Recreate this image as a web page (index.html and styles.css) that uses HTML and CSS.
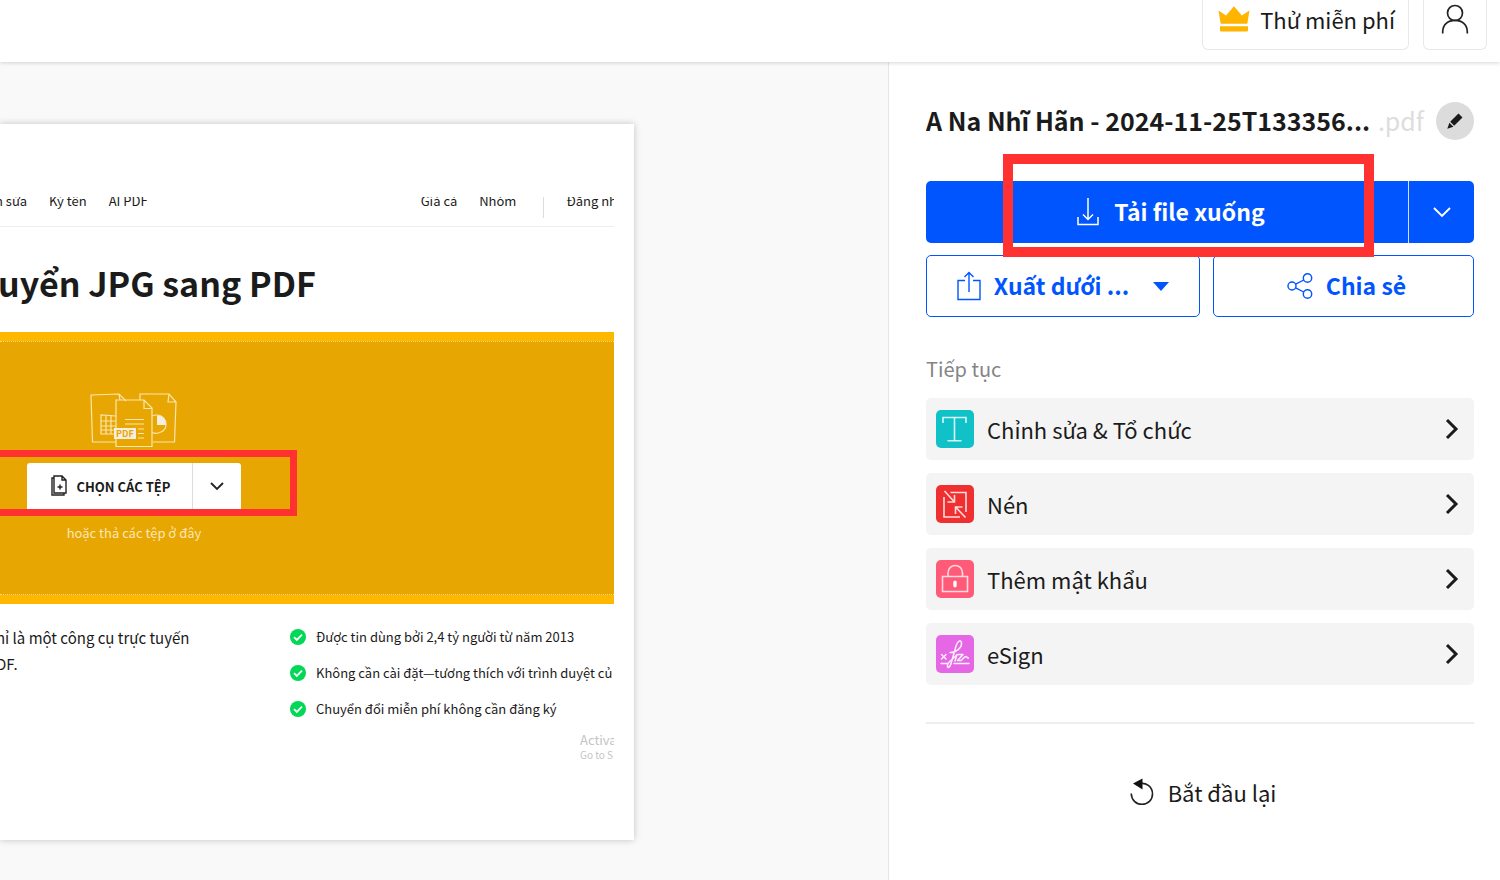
FILE: index.html
```html
<!DOCTYPE html>
<html lang="vi">
<head>
<meta charset="utf-8">
<meta name="viewport" content="width=device-width, initial-scale=1">
<title>Chuyển JPG sang PDF</title>
<link rel="stylesheet" href="styles.css">
</head>
<body>
<header class="topbar">
  <button class="top-btn trial" type="button">
    <svg class="crown" viewBox="0 0 32 26" width="32" height="26" aria-hidden="true"><path fill="#ffb400" d="M.5 4.500 8 9.500 16 .3l7.800 9.200 7.700-5-2.200 13.300H2.700zM2 20.300h28v4q0 1.200-1.200 1.200H3.200Q2 25.500 2 24.300z"/></svg>
    <span>Thử miễn phí</span>
  </button>
  <button class="top-btn account" type="button" aria-label="Tài khoản">
    <svg viewBox="0 0 28 30" width="28" height="30" fill="none" stroke="#222" stroke-width="1.700" aria-hidden="true"><circle cx="14" cy="9" r="7.500"/><path d="M1.700 29.500V28C1.700 20.500 7 16.300 14 16.300S26.300 20.500 26.300 28v1.500"/></svg>
  </button>
</header>
<div class="workspace">
  <main class="preview">
    <article class="sheet">
      <nav class="site-nav">
        <div class="nav-left"><span>n sửa</span><span>Ký tên</span><span>AI PDF</span></div>
        <div class="nav-right"><span>Giá cả</span><span>Nhóm</span><i class="nav-sep"></i><span>Đăng nh</span></div>
      </nav>
      <h1 class="headline">uyển JPG sang PDF</h1>
      <section class="drop">
        <div class="drop-area">
          <div class="drop-col">
            <svg class="files" viewBox="0 0 88 56" width="88" height="56" fill="none" stroke="#f9e6b0" stroke-width="1.200" aria-hidden="true">
              <path d="M26 50H2.500L1 3l28-1 7 7M29 2l1 6M50 8V2h29l7 8-1.500 40H63M79 2l-1 8h8"/>
              <path d="M26 24l-15-1v19h14M11 29h15M11 34h15M11 38h14M16 23v19M21 23v19"/>
              <path d="M26 36V8h28l8 8v38.500H26V47M54 8v8.500h8M35 27.500h19M35 32h19M48 37h6M48 41.500h6M48 46h6"/>
              <path d="M62 24q5-2 9 0 5 3 5 8.500T71 40q-5 2.500-9 .5"/>
              <path fill="#f5eee0" stroke="none" d="M67 23.500q9 0 9 9.500h-9zM24 36h22v11H24z"/>
              <text class="files-label" x="26" y="45">PDF</text>
            </svg>
            <div class="pick">
              <button class="pick-main" type="button">
                <svg viewBox="0 0 18 22" width="18" height="22" fill="none" stroke="#222" stroke-width="1.400" aria-hidden="true"><path d="M4 1h8l4 4v13H4zM12 1v4h4M4 3H2v17h12v-2M10 9.500v5M7.500 12h5"/></svg>
                <span>CHỌN CÁC TỆP</span>
              </button>
              <button class="pick-more" type="button" aria-label="Nguồn khác">
                <svg viewBox="0 0 14 10" width="14" height="10" fill="none" stroke="#222" stroke-width="1.800" aria-hidden="true"><path d="M1 2l6 6 6-6"/></svg>
              </button>
            </div>
            <p class="hint">hoặc thả các tệp ở đây</p>
            <div class="mark mark-pick"></div>
          </div>
        </div>
      </section>
      <div class="about">
        <p class="blurb">hỉ là một công cụ trực tuyến<br>DF.</p>
        <ul class="points">
          <li><svg viewBox="0 0 16 16" width="16" height="16" aria-hidden="true"><circle cx="8" cy="8" r="8" fill="#00d856"/><path d="M4 8.200l2.800 2.800L12 5.700" fill="none" stroke="#fff" stroke-width="1.800"/></svg>Được tin dùng bởi 2,4 tỷ người từ năm 2013</li>
          <li><svg viewBox="0 0 16 16" width="16" height="16" aria-hidden="true"><circle cx="8" cy="8" r="8" fill="#00d856"/><path d="M4 8.200l2.800 2.800L12 5.700" fill="none" stroke="#fff" stroke-width="1.800"/></svg>Không cần cài đặt—tương thích với trình duyệt củ</li>
          <li><svg viewBox="0 0 16 16" width="16" height="16" aria-hidden="true"><circle cx="8" cy="8" r="8" fill="#00d856"/><path d="M4 8.200l2.800 2.800L12 5.700" fill="none" stroke="#fff" stroke-width="1.800"/></svg>Chuyển đổi miễn phí không cần đăng ký</li>
        </ul>
      </div>
      <div class="watermark"><p class="wm-title">Activa</p><p class="wm-sub">Go to S</p></div>
    </article>
  </main>
  <aside class="panel">
    <div class="file-row">
      <h2 class="file-name">A Na Nhĩ Hãn - 2024-11-25T133356...</h2>
      <span class="file-ext">.pdf</span>
      <button class="edit" type="button" aria-label="Đổi tên">
        <svg viewBox="0 0 16 16" width="16" height="16" fill="#1b1b1b" aria-hidden="true"><path d="M11.500.5l4 4-8.300 8.300-4-4zM2.400 9.700l4 4L.3 15.700z"/></svg>
      </button>
    </div>
    <div class="actions">
      <div class="download">
        <button class="download-main" type="button">
          <svg viewBox="0 0 22 28" width="22" height="28" fill="none" stroke="#fff" stroke-width="1.500" aria-hidden="true"><path d="M11 0v21M6 16.500l5 5 5-5M1 19v7.500h20V19"/></svg>
          <span>Tải file xuống</span>
        </button>
        <button class="download-more" type="button" aria-label="Tùy chọn tải xuống">
          <svg viewBox="0 0 18 12" width="18" height="12" fill="none" stroke="#fff" stroke-width="1.900" aria-hidden="true"><path d="M1 2l8 8 8-8"/></svg>
        </button>
      </div>
      <div class="secondary">
        <button class="ghost" type="button">
          <svg viewBox="0 0 24 30" width="24" height="30" fill="none" stroke="#0055ff" stroke-width="1.400" aria-hidden="true"><path d="M8 9.500H1V28.500h22V9.500h-7M12 21V1.500M7.500 6L12 1.500 16.500 6"/></svg>
          <span>Xuất dưới ...</span>
          <svg class="caret" viewBox="0 0 16 9" width="16" height="9" aria-hidden="true"><path fill="#0055ff" d="M0 0h16L8 9z"/></svg>
        </button>
        <button class="ghost share" type="button">
          <svg viewBox="0 0 26 26" width="26" height="26" fill="none" stroke="#0055ff" stroke-width="1.400" aria-hidden="true"><circle cx="5" cy="13" r="4"/><circle cx="20.500" cy="5" r="4.200"/><circle cx="20.500" cy="21" r="4.200"/><path d="M8.600 11.200l8.200-4.200M8.600 14.800l8.200 4.200"/></svg>
          <span>Chia sẻ</span>
        </button>
      </div>
      <div class="mark mark-download"></div>
    </div>
    <h3 class="next-title">Tiếp tục</h3>
    <nav class="next">
      <a class="tool" href="#edit">
        <svg viewBox="0 0 38 38" width="38" height="38" fill="none" aria-hidden="true"><rect width="38" height="38" rx="5" fill="#10c1c7"/><path stroke="#d5fbfb" stroke-width="1.600" d="M7 13V7.500h23V13M18.500 7.500v23M11.500 30.700h14"/></svg>
        <span>Chỉnh sửa &amp; Tổ chức</span>
        <svg class="go" viewBox="0 0 14 22" width="14" height="22" aria-hidden="true"><path d="M2 2l9 9-9 9"/></svg>
      </a>
      <a class="tool" href="#compress">
        <svg viewBox="0 0 38 38" width="38" height="38" fill="none" aria-hidden="true"><rect width="38" height="38" rx="5" fill="#f03030"/><path stroke="#ffdcdc" stroke-width="1.600" d="M14.500 7.500h15.500V27M8 12v20h16M8.500 6l9.500 10.500M18.500 10v7h-7M29.500 32.500L20 22.500M19.500 29v-7h7"/></svg>
        <span>Nén</span>
        <svg class="go" viewBox="0 0 14 22" width="14" height="22" aria-hidden="true"><path d="M2 2l9 9-9 9"/></svg>
      </a>
      <a class="tool" href="#protect">
        <svg viewBox="0 0 38 38" width="38" height="38" fill="none" aria-hidden="true"><rect width="38" height="38" rx="5" fill="#ff5a78"/><path stroke="#ffd9df" stroke-width="1.600" d="M6.500 16.500h25v15h-25zM12 16.500V13C12 3 26.500 3 26.500 13v3.500"/><rect x="17.300" y="20.500" width="3.400" height="7" rx="1.700" fill="#fff"/></svg>
        <span>Thêm mật khẩu</span>
        <svg class="go" viewBox="0 0 14 22" width="14" height="22" aria-hidden="true"><path d="M2 2l9 9-9 9"/></svg>
      </a>
      <a class="tool" href="#esign">
        <svg viewBox="0 0 38 38" width="38" height="38" fill="none" aria-hidden="true"><rect width="38" height="38" rx="5" fill="#e667e6"/><path stroke="#fff0ff" stroke-width="1.500" stroke-linecap="round" stroke-linejoin="round" d="M5.500 19.500l4.500 4.500M10 19.500L5.500 24M5 28.500h7M18 28.500h15M14 17.500c6 .5 12-5 11.500-9.500-.5-4-4-2-5.500 3L15.500 27c-1.500 6-4.500 7-4 3 .5-3.500 6-6 9.500-10.500l-2 6.500M22 19.500h5l-5.500 6h3.500c2-1.500 3.500-4 5-4s.5 2 2.500 1.500"/></svg>
        <span>eSign</span>
        <svg class="go" viewBox="0 0 14 22" width="14" height="22" aria-hidden="true"><path d="M2 2l9 9-9 9"/></svg>
      </a>
    </nav>
    <div class="restart-row">
      <button class="restart" type="button">
        <svg viewBox="0 0 24 28" width="24" height="28" fill="none" aria-hidden="true"><path stroke="#222" stroke-width="1.600" d="M8.500 6C16 3.500 22.500 9 22.500 16 22.500 22 18 26.300 12 26.300S1.500 22 1.200 15.500"/><path fill="#111" d="M3 5.500L12.500.5v11z"/></svg>
        <span>Bắt đầu lại</span>
      </button>
    </div>
  </aside>
</div>
</body>
</html>
```
FILE: styles.css
```css
* { box-sizing: border-box; }
body {
  margin: 0;
  min-height: 100vh;
  display: flex;
  flex-direction: column;
  background: #fff;
  color: #1b1b1b;
  font-family: "Noto Sans CJK SC", "Noto Sans", sans-serif;
  overflow-x: hidden;
}
h1, h2, h3, p, ul { margin: 0; padding: 0; }
button {
  font: inherit;
  color: inherit;
  background: none;
  border: 0;
  padding: 0;
  cursor: pointer;
}
svg { flex: none; display: block; }

.topbar {
  display: flex;
  justify-content: flex-end;
  align-items: flex-start;
  gap: 14px;
  height: 62px;
  padding-right: 13px;
  background: #fff;
  box-shadow: 0 1px 4px rgba(0, 0, 0, .16);
  z-index: 1;
}
.top-btn {
  display: flex;
  align-items: center;
  justify-content: center;
  gap: 10px;
  height: 50px;
  padding-bottom: 12px;
  border: 1px solid #e8e8e8;
  border-top: 0;
  border-radius: 0 0 6px 6px;
  font-size: 22px;
  line-height: 32px;
}
.trial { padding-left: 15px; padding-right: 13px; }
.account { width: 64px; }

.workspace { flex: 1; display: flex; }
.preview {
  flex: 1;
  min-width: 0;
  padding: 62px 254px 40px 0;
  background: #f9f9f9;
}
.sheet {
  height: 716px;
  padding: 73px 20px 0 0;
  background: #fff;
  box-shadow: 0 0 7px rgba(0, 0, 0, .22);
  white-space: nowrap;
}
.site-nav {
  display: flex;
  justify-content: space-between;
  height: 30px;
  overflow: hidden;
  border-bottom: 1px solid #eee;
  font-size: 13px;
  line-height: 8px;
}
.nav-left, .nav-right { display: flex; gap: 22px; }
.nav-left { margin-left: -5px; }
.nav-right { margin-right: -3px; }
.nav-sep { width: 1px; height: 21px; margin: 0 0 0 5px; background: #ddd; }
.headline {
  margin: 30px 0 23px -2px;
  font-size: 34px;
  line-height: 52px;
  font-weight: 700;
}
.drop { padding: 9px 0; background: #ffb800; }
.drop-area {
  height: 254px;
  padding-top: 50px;
  background: #e8a602;
  border: dotted #f6d888;
  border-width: 1px 0;
}
.drop-col {
  position: relative;
  width: 268px;
  display: flex;
  flex-direction: column;
  align-items: center;
}
.files-label { font-size: 9px; font-weight: 700; fill: #e8a602; stroke: none; }
.pick {
  display: flex;
  height: 46px;
  margin-top: 15px;
  background: #fff;
  border-radius: 3px 3px 0 0;
}
.pick-main {
  display: flex;
  align-items: center;
  justify-content: center;
  gap: 8px;
  width: 166px;
  padding-left: 2px;
  border-right: 1px solid #ddd;
  font-size: 13px;
  font-weight: 700;
}
.pick-more { width: 48px; display: grid; place-items: center; }
.hint { margin-top: 14px; font-size: 13px; line-height: 20px; color: #fbe7b5; }
.mark { position: absolute; pointer-events: none; }
.mark-pick {
  top: 58px;
  left: -12px;
  right: -29px;
  height: 66px;
  border: 7px solid #ff3131;
}
.about { display: flex; justify-content: space-between; padding-top: 21px; }
.blurb { margin-left: -4px; font-size: 15px; line-height: 26px; }
.points {
  list-style: none;
  width: 324px;
  overflow: hidden;
  font-size: 13px;
  line-height: 24px;
}
.points li { display: flex; align-items: center; gap: 10px; margin-bottom: 12px; }
.watermark {
  width: 34px;
  margin: -1px 0 0 auto;
  overflow: hidden;
  color: #c4c4c4;
}
.wm-title { font-size: 13px; line-height: 16px; }
.wm-sub { font-size: 10px; line-height: 14px; }

.panel {
  width: 612px;
  padding: 40px 26px 40px 37px;
  border-left: 1px solid #e6e6e6;
}
.file-row { display: flex; align-items: center; height: 38px; }
.file-name {
  flex: 1;
  min-width: 0;
  overflow: hidden;
  white-space: nowrap;
  font-size: 25px;
  line-height: 36px;
  padding-bottom: 2px;
  font-weight: 700;
}
.file-ext { padding-bottom: 2px; font-size: 25px; line-height: 36px; color: #ddd; }
.edit {
  display: grid;
  place-items: center;
  width: 38px;
  height: 38px;
  margin-left: 12px;
  border-radius: 50%;
  background: #dcdcdc;
}
.actions { position: relative; margin-top: 41px; font-size: 23px; font-weight: 700; }
.actions span { padding-bottom: 3px; }
.download {
  display: flex;
  height: 62px;
  background: #0055ff;
  border-radius: 5px;
  color: #fff;
}
.download-main {
  flex: 1;
  display: flex;
  align-items: center;
  justify-content: center;
  gap: 15px;
  padding-left: 8px;
}
.download-more {
  width: 66px;
  display: grid;
  place-items: center;
  border-left: 1px solid #cfe0ff;
}
.secondary {
  display: grid;
  grid-template-columns: 274fr 261fr;
  gap: 13px;
  margin-top: 12px;
}
.ghost {
  display: flex;
  align-items: center;
  justify-content: center;
  gap: 13px;
  height: 62px;
  border: 1px solid #0055ff;
  border-radius: 5px;
  color: #0055ff;
}
.caret { margin-left: 11px; }
.share { padding-left: 6px; }
.mark-download {
  top: -27px;
  left: 77px;
  right: 100px;
  height: 103px;
  border: 10px solid #ff3131;
}
.next-title {
  margin: 36px 0 13px;
  font-size: 20px;
  line-height: 32px;
  font-weight: 400;
  color: #858585;
}
.next { display: grid; gap: 13px; }
.tool {
  display: flex;
  align-items: center;
  gap: 13px;
  height: 62px;
  padding: 0 15px 0 10px;
  border-radius: 5px;
  background: #f4f4f4;
  color: inherit;
  font-size: 22px;
  line-height: 36px;
  text-decoration: none;
}
.go { margin-left: auto; fill: none; stroke: #1b1b1b; stroke-width: 3; }
.restart-row {
  display: flex;
  justify-content: center;
  margin-top: 37px;
  padding-top: 50px;
  border-top: 2px solid #eee;
}
.restart {
  display: flex;
  align-items: center;
  gap: 14px;
  padding-left: 6px;
  font-size: 22px;
  line-height: 36px;
}
```
